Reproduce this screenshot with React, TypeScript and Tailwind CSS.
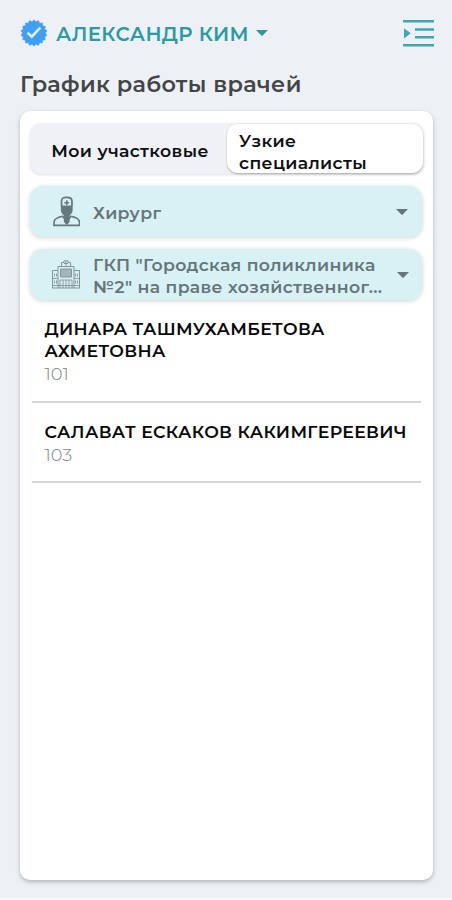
import { useState } from 'react';
import type { ReactNode } from 'react';

interface Doctor {
    name: ReactNode;
    room: string;
    className: string;
}

const doctors: Doctor[] = [
    { name: <>ДИНАРА ТАШМУХАМБЕТОВА<br />АХМЕТОВНА</>, room: '101', className: 'h-[85px]' },
    { name: 'САЛАВАТ ЕСКАКОВ КАКИМГЕРЕЕВИЧ', room: '103', className: 'h-[80px] pt-[18px]' },
];

// Badge outline: alternating outer and inner points
const TEETH = 18;
const badgePoints = Array.from({ length: TEETH * 2 }, (_, i) => {
    const r = i % 2 === 0 ? 13.2 : 11.4;
    const a = (i * Math.PI) / TEETH;
    return `${(14 + r * Math.sin(a)).toFixed(2)},${(14 - r * Math.cos(a)).toFixed(2)}`;
}).join(' ');

function VerifiedIcon() {
    return (
        <svg className="h-7 w-7 shrink-0" viewBox="0 0 28 28">
            <polygon points={badgePoints} fill="#3f9ff3" stroke="#3f9ff3" strokeWidth=".5" strokeLinejoin="round" />
            <path d="M7.500 13.700l4.300 4L20.300 8.700" fill="none" stroke="#e4f3ff" strokeWidth="2.500" />
        </svg>
    );
}

function MenuIcon() {
    return (
        <svg className="h-7 w-[31px]" viewBox="0 0 31 28" fill="#3fa8b2">
            <path d="M0 0h31v2.500H0zM12 8.200h19v2.500H12zM12 16h19v2.500H12zM0 24.100h31v2.500H0zM1 8.200l6.800 5.100L1 18.400z" />
        </svg>
    );
}

function DoctorIcon() {
    return (
        <svg className="ml-[0.5px] h-[31px] w-[27.5px]" viewBox="0 0 28 31" fill="none" stroke="#66777d">
            <path d="M8.700 10V4.500Q8.700 1 14 1t5.300 3.500V10" strokeWidth="1.800" />
            <path d="M8 9.500h12v4.500q0 5-6 6-6-1-6-6z" fill="#66777d" stroke="none" />
            <path d="M14 4v5M11.500 6.500h5" strokeWidth="1.500" />
            <path d="M1 29.600v-3q0-4.600 9-6.300l4 6.200 4-6.200q9 1.700 9 6.300v3z" strokeWidth="1.700" />
            <path d="M11 18h6l-.5 5 .5 3-3 3.500-3-3.500.5-3z" fill="#66777d" stroke="none" />
        </svg>
    );
}

function HospitalIcon() {
    return (
        <svg className="h-[29px] w-7" viewBox="0 0 28 29" fill="none" stroke="#83949a">
            <path d="M.5 28V10.500H6V28M27.500 28V10.500H22V28M6 10.500V6.500h16v4M0 28h28" />
            <path d="M9.500 6.500V2.500H12V.8h4v1.700h2.500v4M14 1.500v4M12 3.500h4" />
            <path d="M8.500 9h11v8h-11z" fill="#a4b5ba" />
            <path d="M8 20h12v8M8 28v-8M11 20v8M14 20v8M17 20v8M2.500 13.500v3M4.500 13.500v3M23.500 13.500v3M25.500 13.500v3M.5 18.500H6M22 18.500h5.500M2.500 20.500v3M4.500 20.500v3M23.500 20.500v3M25.500 20.500v3M.5 25.500H28" strokeWidth=".9" />
        </svg>
    );
}

function Caret({ className }: { className: string }) {
    return (
        <svg className={className} viewBox="0 0 12 6" fill="currentColor">
            <path d="M0 0h12L6.700 5.500q-.7.600-1.400 0z" />
        </svg>
    );
}

function SelectField({ icon, caretClass, children }: { icon: ReactNode; caretClass: string; children: ReactNode }) {
    return (
        <button
            type="button"
            className="flex h-[51px] w-full items-center rounded-[13px] bg-[#d8f1f5] pl-[22px] text-left text-[#66757b] shadow-[0_1px_5px_rgba(0,0,0,0.18)]"
        >
            {icon}
            <span className="ml-[13px] flex-1 pt-0.5 text-[17.3px] leading-[22px] font-semibold tracking-[0.34px] whitespace-nowrap">
                {children}
            </span>
            <Caret className={caretClass} />
        </button>
    );
}

export default function App() {
    const [tab, setTab] = useState<'local' | 'special'>('special');

    return (
        <div className="flex h-[900px] w-[452px] flex-col border-b-2 border-[#f8fafb] bg-[#edf1f6] px-5 font-['Montserrat','Inter',sans-serif]">
            <header className="flex h-[67px] w-[414px] items-center justify-between">
                <div className="flex items-center text-[#2b9aa2]">
                    <VerifiedIcon />
                    <span className="ml-2 pt-0.5 text-[19.7px] font-semibold tracking-[0.4px] whitespace-nowrap">АЛЕКСАНДР КИМ</span>
                    <Caret className="ml-[7px] h-[6px] w-3" />
                </div>
                <MenuIcon />
            </header>

            <h1 className="h-11 text-[22.4px] leading-[34px] font-semibold tracking-[0.36px] whitespace-nowrap text-[#434547]">
                График работы врачей
            </h1>

            <main className="h-[769px] w-[413px] rounded-[10px] bg-white px-[10px] pt-3 shadow-[0_2px_4px_rgba(0,0,0,0.25)]">
                <div className="flex h-[51px] w-[394px] rounded-[11px] bg-[#eff1f6] p-px text-[17.3px] leading-[22px] font-semibold tracking-[0.36px] text-[#0c0e10] shadow-[0_1px_3px_rgba(0,0,0,0.13)]">
                    <button type="button" onClick={() => setTab('local')} className="w-[196px] pt-[5px] pl-0.5 whitespace-nowrap">
                        Мои участковые
                    </button>
                    <button
                        type="button"
                        onClick={() => setTab('special')}
                        aria-pressed={tab === 'special'}
                        className="w-[196px] rounded-[11px] bg-white pt-[6px] pl-3 text-left shadow-[0_1px_2px_rgba(0,0,0,0.3)]"
                    >
                        Узкие
                        <br />
                        специалисты
                    </button>
                </div>

                <div className="mt-3 flex w-[392px] flex-col gap-3">
                    <SelectField icon={<DoctorIcon />} caretClass="mr-[14px] h-[6px] w-3 shrink-0">
                        Хирург
                    </SelectField>
                    <SelectField icon={<HospitalIcon />} caretClass="mr-[13px] h-[6px] w-3 shrink-0">
                        ГКП "Городская поликлиника
                        <br />
                        №2" на праве хозяйственног...
                    </SelectField>
                </div>

                <ul className="mt-[18px] ml-[2px] w-[389px]">
                    {doctors.map((doctor) => (
                        <li key={doctor.room} className={`${doctor.className} border-b-2 border-[#d5d6d7] pl-[12.5px]`}>
                            <p className="text-[17.3px] leading-[22px] font-semibold tracking-[0.33px] whitespace-nowrap text-[#080808]">{doctor.name}</p>
                            <p className="text-[17.8px] leading-[24px] font-light text-[#808080]">{doctor.room}</p>
                        </li>
                    ))}
                </ul>
            </main>
        </div>
    );
}
